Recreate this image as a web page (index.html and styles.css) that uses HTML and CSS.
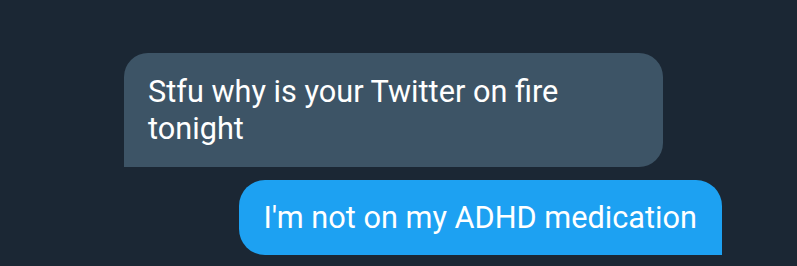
FILE: index.html
```html
<!DOCTYPE html>
<html lang="en">
<head>
    <meta charset="UTF-8">
    <meta name="viewport" content="width=device-width, initial-scale=1.0">
    <title>Messages</title>
    <link rel="stylesheet" href="styles.css">
</head>
<body>

    <div class="thread">
        <div class="bubble received">
            Stfu why is your Twitter on fire tonight
        </div>

        <div class="bubble sent">
            I'm not on my ADHD medication
        </div>
    </div>

</body>
</html>
```

FILE: styles.css
```css
body {
    margin: 0;
    background-color: #1b2734;
    font-family: Roboto, "Noto Sans", sans-serif;
}

.thread {
    display: flex;
    flex-direction: column;
    gap: 13px;
    padding: 53px 75px 0 124px;
}

.bubble {
    box-sizing: border-box;
    color: #ffffff;
    font-size: 30.7px;
    line-height: 37px;
}

/* 对方的消息：左侧，灰蓝色，左下角是直角 */
.received {
    align-self: flex-start;
    width: 539px;
    padding: 20px 24px;
    background-color: #3d5466;
    border-radius: 24px 24px 24px 0;
}

/* 自己的消息：右侧，蓝色，右下角是直角 */
.sent {
    align-self: flex-end;
    padding: 19px 25px 19px 24px;
    background-color: #1da1f2;
    border-radius: 26px 26px 0 26px;
}
```
